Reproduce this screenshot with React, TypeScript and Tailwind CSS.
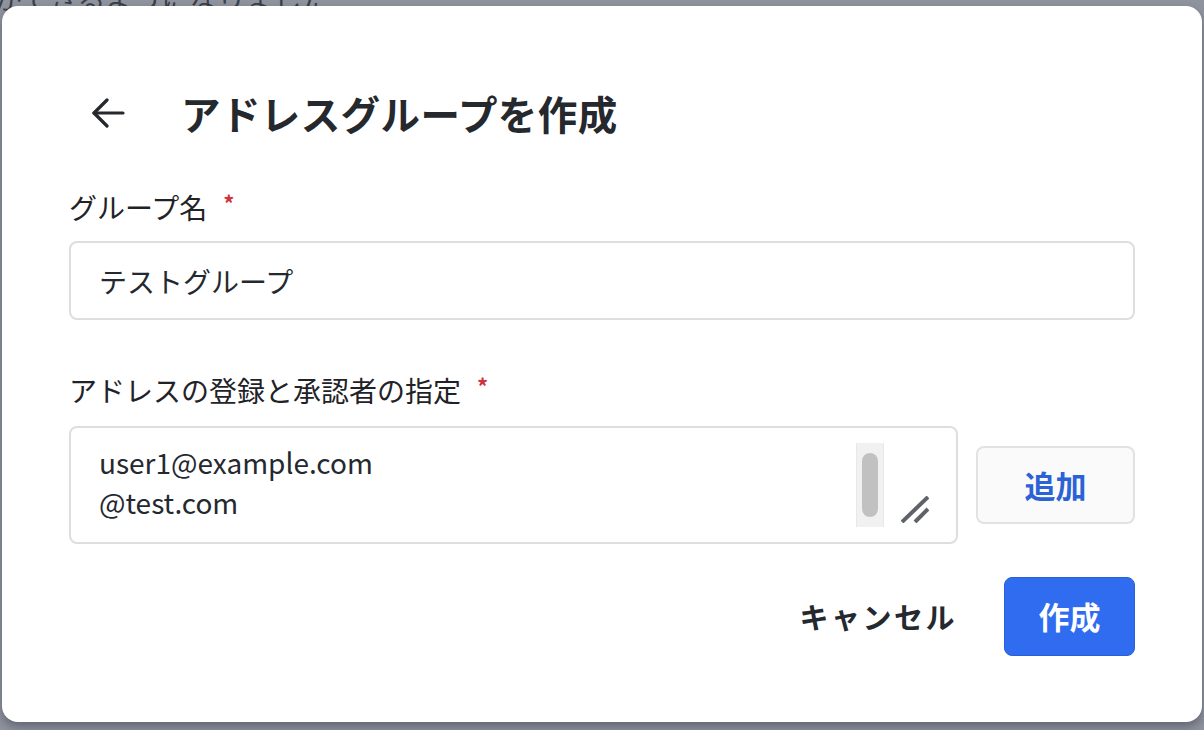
import React from "react";

const font = {
  fontFamily: '"Noto Sans CJK JP", "Noto Sans", sans-serif',
};

const BackArrow = () => (
  <svg width="34" height="30" viewBox="0 0 34 30" fill="none" stroke="#25282d" strokeWidth="3.2" strokeLinecap="round" strokeLinejoin="round">
    <path d="M3 15H32" />
    <path d="M16 2L3 15L16 28" />
  </svg>
);

const Required = () => <span className="ml-[16px] -translate-y-[5px] text-[22px] font-bold text-[#d1313d]">*</span>;

const App = () => {
  return (
    <div
      style={font}
      className="relative h-[730px] w-[1204px] overflow-hidden bg-[#8e939e] pb-[8px] pl-[2px] pr-[2px] pt-[6px]"
    >
      <p className="absolute left-[-6px] top-[-23px] whitespace-nowrap text-[28px] text-[#3b3f47]">
        ができるようになりました
      </p>
      <div className="relative flex h-full flex-col rounded-[16px] bg-white px-[67px] pb-[66px] pt-[80px] shadow-[0_5px_10px_rgba(20,22,40,0.35)]">
        <div className="flex h-[54px] items-center">
          <button className="ml-[22px] flex items-center">
            <BackArrow />
          </button>
          <h1 className="ml-[56px] text-[39.5px] font-bold tracking-[0.4px] text-[#25282d]">アドレスグループを作成</h1>
        </div>

        <label className="mt-[47px] flex h-[40px] items-center text-[28px] leading-[40px] text-[#1f2328]">
          グループ名
          <Required />
        </label>
        <div className="mt-[14px] flex h-[79px] items-center rounded-[8px] border-2 border-[#dedede] px-[28px] text-[28px] text-[#24292f]">
          テストグループ
        </div>

        <label className="mt-[50px] flex h-[40px] items-center text-[28px] leading-[40px] text-[#1f2328]">
          アドレスの登録と承認者の指定
          <Required />
        </label>
        <div className="mt-[16px] flex items-center gap-[18px]">
          <div className="relative h-[118px] flex-1 rounded-[8px] border-2 border-[#dedede] px-[28px] pt-[14px] text-[28px] leading-[40px] text-[#24292f]">
            <div>user1@example.com</div>
            <div>@test.com</div>
            <div className="absolute right-[72px] top-[15px] flex h-[84px] w-[28px] justify-center border-x border-[#e8e8e8] bg-[#f1f1f1] py-[10px]">
              <div className="h-full w-[16px] rounded-full bg-[#c1c1c1]" />
            </div>
            <svg className="absolute bottom-[19px] right-[27px]" width="28" height="27" viewBox="0 0 28 27">
              <path d="M1 26L27 1" stroke="#5f6268" strokeWidth="4" />
              <path d="M14 26L27 13" stroke="#5f6268" strokeWidth="4" />
            </svg>
          </div>
          <button className="h-[78px] w-[159px] rounded-[8px] border-2 border-[#e2e2e2] bg-[#fafafa] text-[31px] font-bold text-[#2b62d6]">
            追加
          </button>
        </div>

        <div className="mt-auto flex items-center justify-end">
          <button className="mr-[47px] text-[29px] font-bold tracking-[2.5px] text-[#24292f]">キャンセル</button>
          <button className="h-[79px] w-[131px] rounded-[8px] border border-[#2a60d8] bg-[#2f6cf0] text-[31px] font-bold text-white">
            作成
          </button>
        </div>
      </div>
    </div>
  );
};

export default App;
